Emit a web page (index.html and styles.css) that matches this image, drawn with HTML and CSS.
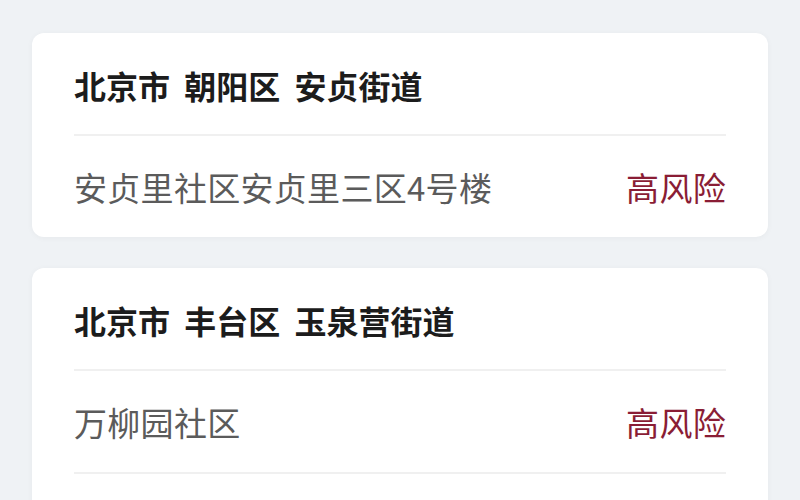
FILE: index.html
```html
<!DOCTYPE html>
<html lang="zh-CN">
<head>
    <meta charset="UTF-8">
    <title>风险地区</title>
    <link rel="stylesheet" href="styles.css">
</head>
<body>
    <div class="list">
        <div class="card">
            <div class="card-title">北京市 朝阳区 安贞街道</div>
            <div class="row">
                <span class="place">安贞里社区安贞里三区4号楼</span>
                <span class="level">高风险</span>
            </div>
        </div>
        <div class="card card-more">
            <div class="card-title">北京市 丰台区 玉泉营街道</div>
            <div class="row">
                <span class="place">万柳园社区</span>
                <span class="level">高风险</span>
            </div>
        </div>
    </div>
</body>
</html>
```

FILE: styles.css
```css
body {
    font-family: "Noto Sans CJK SC", "Noto Sans", sans-serif;
    background-color: #eff2f5;
    margin: 0;
    padding: 0;
}
.list {
    padding: 33px 32px;
    display: flex;
    flex-direction: column;
    gap: 31px;
}
.card {
    background-color: #fff;
    border-radius: 12px;
    padding: 0 42px;
    box-shadow: 0 1px 6px rgba(0, 0, 0, 0.04);
}
.card-title {
    font-size: 32px;
    font-weight: 700;
    word-spacing: 7px;
    color: #1c1c1c;
    line-height: 40px;
    padding: 32px 0 29px;
    border-bottom: 2px solid #f0f0f0;
}
.row {
    display: flex;
    justify-content: space-between;
    align-items: center;
    height: 101px;
    font-size: 33px;
    letter-spacing: 0.3px;
    border-bottom: 2px solid #f0f0f0;
}
.row:last-child {
    border-bottom: none;
}
/* list continues below the fold */
.card-more {
    padding-bottom: 80px;
}
.card-more .row:last-child {
    border-bottom: 2px solid #f0f0f0;
}
.place {
    color: #5b5b5b;
}
.level {
    color: #8a1d35;
}
```
